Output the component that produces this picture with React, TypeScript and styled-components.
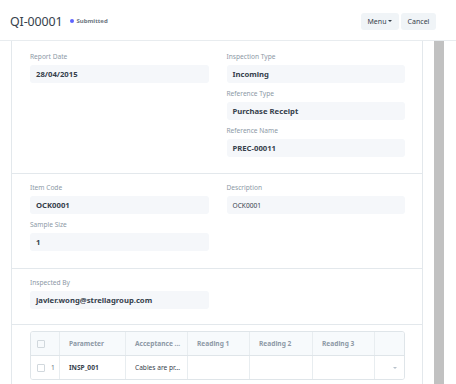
import React from "react";
import styled, { createGlobalStyle } from "styled-components";

const GlobalStyle = createGlobalStyle`
  html, body {
    margin: 0;
    padding: 0;
    background: #ffffff;
    height: 100%;
    overflow: hidden;
  }
  body {
    font-family: "Noto Sans", "Open Sans", sans-serif;
    color: #36414c;
  }
`;

const Page = styled.div`
  width: 456px;
  height: 384px;
  display: flex;
  flex-direction: column;
  overflow: hidden;
`;

const Header = styled.header`
  flex: none;
  display: flex;
  align-items: center;
  justify-content: space-between;
  padding: 2px 20px 0 10px;
  border-bottom: 1px solid #e8ecef;
  box-sizing: border-box;
  height: 41px;
`;

const TitleGroup = styled.div`
  display: flex;
  align-items: center;
  gap: 4px;
`;

const Title = styled.h1`
  margin: 0;
  font-size: 12.4px;
  font-weight: 400;
  color: #36414c;
  letter-spacing: -0.1px;
`;

const Status = styled.span`
  display: flex;
  align-items: center;
  gap: 3px;
  margin-left: 3px;
  font-size: 6px;
  font-weight: 700;
  color: #6c7680;

  &::before {
    content: "";
    width: 4px;
    height: 4px;
    border-radius: 50%;
    background: #5e64ff;
  }
`;

const Actions = styled.div`
  display: flex;
  gap: 2px;
`;

const Button = styled.button<{ $width: number }>`
  width: ${(p) => p.$width}px;
  height: 17px;
  padding: 0;
  border: none;
  border-radius: 3px;
  background: #f0f4f7;
  color: #36414c;
  font-family: inherit;
  font-size: 7px;
  display: flex;
  align-items: center;
  justify-content: center;
  gap: 2px;
`;

const Caret = styled.span`
  width: 0;
  height: 0;
  border-left: 2px solid transparent;
  border-right: 2px solid transparent;
  border-top: 2px solid #36414c;
`;

const Body = styled.div`
  flex: 1;
  display: flex;
  padding-left: 11px;
  min-height: 0;
`;

const Card = styled.div`
  width: 412px;
  box-sizing: border-box;
  border-left: 1px solid #e3e8ec;
  border-right: 1px solid #e3e8ec;
  display: flex;
  flex-direction: column;
`;

const Scrollbar = styled.div`
  width: 10px;
  margin-left: 11px;
  background: #c1c1c1;
`;

const Section = styled.section<{ $top?: number; $bottom?: number }>`
  padding: ${(p) => p.$top ?? 9}px 17px ${(p) => p.$bottom ?? 16}px 18px;
  border-bottom: 1px solid #e3e8ec;
  display: grid;
  grid-template-columns: 1fr 1fr;
  column-gap: 18px;
  align-items: start;
`;

const Column = styled.div`
  display: flex;
  flex-direction: column;
  gap: 6px;
`;

const Field = styled.div`
  display: flex;
  flex-direction: column;
  gap: 3px;
`;

const Label = styled.label`
  font-size: 6.6px;
  line-height: 10px;
  color: #8d99a6;
`;

const Value = styled.div<{ $plain?: boolean }>`
  height: 18px;
  box-sizing: border-box;
  padding: 0 6px;
  display: flex;
  align-items: center;
  border-radius: 3px;
  background: #f5f7fa;
  font-size: ${(p) => (p.$plain ? "6.6px" : "7.7px")};
  font-weight: ${(p) => (p.$plain ? 400 : 700)};
  color: #36414c;
  white-space: nowrap;
`;

const TableSection = styled.section`
  padding: 6px 17px 0 18px;
`;

const Table = styled.div`
  border: 1px solid #dfe5e9;
  border-radius: 3px;
  overflow: hidden;
`;

const Row = styled.div<{ $head?: boolean }>`
  display: grid;
  grid-template-columns: 28px 66px 62px 62px 63px 62px 1fr;
  height: 23px;
  background: ${(p) => (p.$head ? "#f7fafc" : "#ffffff")};
  border-bottom: ${(p) => (p.$head ? "1px solid #dfe5e9" : "none")};
`;

const Cell = styled.div<{ $head?: boolean; $bold?: boolean }>`
  display: flex;
  align-items: center;
  gap: 6px;
  padding: 0 9px;
  border-left: 1px solid #e8edf0;
  font-size: 6.6px;
  font-weight: ${(p) => (p.$head || p.$bold ? 700 : 400)};
  color: ${(p) => (p.$head ? "#8d99a6" : "#36414c")};
  white-space: nowrap;
  overflow: hidden;

  &:first-child {
    border-left: none;
    padding: 0 0 0 6px;
  }
`;

const Check = styled.span`
  width: 6px;
  height: 6px;
  border: 1px solid #d1d8dd;
  border-radius: 1px;
  flex: none;
`;

const RowIndex = styled.span`
  color: #6c7680;
  font-weight: 400;
`;

const RowCaret = styled.span`
  margin-left: auto;
  margin-right: -2px;
  width: 0;
  height: 0;
  border-left: 2.5px solid transparent;
  border-right: 2.5px solid transparent;
  border-top: 2.5px solid #b8c2cc;
`;

export default function App() {
  return (
    <Page>
      <GlobalStyle />
      <Header>
        <TitleGroup>
          <Title>QI-00001</Title>
          <Status>Submitted</Status>
        </TitleGroup>
        <Actions>
          <Button $width={38}>
            Menu <Caret />
          </Button>
          <Button $width={35}>Cancel</Button>
        </Actions>
      </Header>
      <Body>
        <Card>
          <Section $top={11}>
            <Column>
              <Field>
                <Label>Report Date</Label>
                <Value>28/04/2015</Value>
              </Field>
            </Column>
            <Column>
              <Field>
                <Label>Inspection Type</Label>
                <Value>Incoming</Value>
              </Field>
              <Field>
                <Label>Reference Type</Label>
                <Value>Purchase Receipt</Value>
              </Field>
              <Field>
                <Label>Reference Name</Label>
                <Value>PREC-00011</Value>
              </Field>
            </Column>
          </Section>
          <Section $bottom={17}>
            <Column>
              <Field>
                <Label>Item Code</Label>
                <Value>OCK0001</Value>
              </Field>
              <Field>
                <Label>Sample Size</Label>
                <Value>1</Value>
              </Field>
            </Column>
            <Column>
              <Field>
                <Label>Description</Label>
                <Value $plain>OCK0001</Value>
              </Field>
            </Column>
          </Section>
          <Section $bottom={15}>
            <Column>
              <Field>
                <Label>Inspected By</Label>
                <Value>javier.wong@strellagroup.com</Value>
              </Field>
            </Column>
          </Section>
          <TableSection>
            <Table>
              <Row $head>
                <Cell $head>
                  <Check />
                </Cell>
                <Cell $head>Parameter</Cell>
                <Cell $head>Acceptance ...</Cell>
                <Cell $head>Reading 1</Cell>
                <Cell $head>Reading 2</Cell>
                <Cell $head>Reading 3</Cell>
                <Cell $head />
              </Row>
              <Row>
                <Cell>
                  <Check />
                  <RowIndex>1</RowIndex>
                </Cell>
                <Cell $bold>INSP_001</Cell>
                <Cell>Cables are pr...</Cell>
                <Cell />
                <Cell />
                <Cell />
                <Cell>
                  <RowCaret />
                </Cell>
              </Row>
            </Table>
          </TableSection>
        </Card>
        <Scrollbar />
      </Body>
    </Page>
  );
}
